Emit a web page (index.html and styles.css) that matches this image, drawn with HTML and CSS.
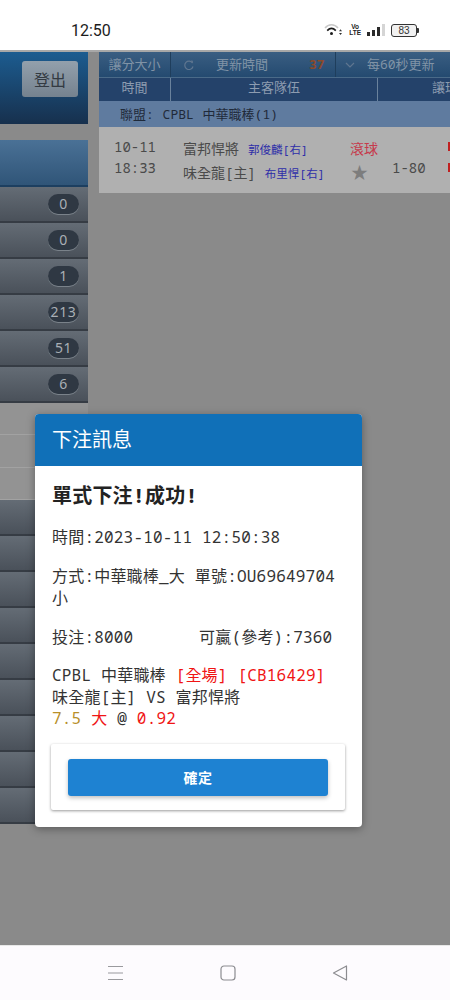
FILE: index.html
```html
<!DOCTYPE html>
<html lang="zh-Hant">
  <head>
    <meta charset="UTF-8" />
    <meta name="viewport" content="width=device-width, initial-scale=1.0" />
    <title>下注訊息</title>
    <link rel="stylesheet" href="styles.css">
  </head>
  <body>
    <div class="status-bar">
      <span class="clock">12:50</span>
      <div class="status-icons">
        <svg class="wifi" width="19" height="14" viewBox="0 0 19 14">
          <path d="M1 5 C4.5 0.5 10.5 0.5 14 5" fill="none" stroke="#c8c8c8" stroke-width="1.5"/>
          <path d="M3.2 7.6 C6 4.8 9 4.8 11.8 7.6" fill="none" stroke="#1c1c1c" stroke-width="1.7"/>
          <circle cx="7.5" cy="10.5" r="1.5" fill="#1c1c1c"/>
          <path d="M15 8.2 h3 l-1.5 -2z M15 10 h3 l-1.5 2z" fill="#333"/>
        </svg>
        <span class="volte">Vo<br>LTE</span>
        <div class="signal">
          <i class="s1"></i><i class="s2"></i><i class="s3"></i><i class="s4"></i>
        </div>
        <div class="battery"><span>83</span></div>
      </div>
    </div>

    <div class="app">
      <div class="sidebar">
        <div class="top-box"><button class="logout">登出</button></div>
        <div class="side-title"></div>
        <div class="side-row"><span class="pill">0</span></div>
        <div class="side-row"><span class="pill">0</span></div>
        <div class="side-row"><span class="pill">1</span></div>
        <div class="side-row"><span class="pill">213</span></div>
        <div class="side-row"><span class="pill">51</span></div>
        <div class="side-row"><span class="pill">6</span></div>
        <div class="side-light"></div>
        <div class="side-light"></div>
        <div class="side-light"></div>
        <div class="side-row"></div>
        <div class="side-row"></div>
        <div class="side-row"></div>
        <div class="side-row"></div>
        <div class="side-row"></div>
        <div class="side-row"></div>
        <div class="side-row"></div>
        <div class="side-row"></div>
        <div class="side-row"></div>
      </div>

      <div class="content">
        <div class="toolbar">
          <div class="tool tool-size">讓分大小</div>
          <div class="tool tool-time">
            <svg width="12" height="12" viewBox="0 0 12 12">
              <path d="M9.5 4 A4.2 4.2 0 1 0 10 7.5" fill="none" stroke="#5f7690" stroke-width="1.2"/>
              <path d="M7.6 1.4 L10 1.8 L9.6 4.6z" fill="#5f7690"/>
            </svg>
            <span class="time-label">更新時間</span>
            <span class="count">37</span>
          </div>
          <div class="tool tool-rate">
            <svg width="10" height="6" viewBox="0 0 10 6">
              <path d="M1 1 L5 5 L9 1" fill="none" stroke="#5f7690" stroke-width="1.2"/>
            </svg>
            <span>每60秒更新</span>
          </div>
        </div>
        <div class="head">
          <div class="head-time">時間</div>
          <div class="head-team">主客隊伍</div>
          <div class="head-odds">讓球</div>
        </div>
        <div class="league">聯盟: CPBL 中華職棒(1)</div>
        <div class="game">
          <span class="g-date">10-11</span>
          <span class="g-team g-mid">富邦悍將<small>郭俊麟[右]</small></span>
          <span class="g-live g-mid">滾球</span>
          <span></span>
          <i class="g-odd"></i>
          <span class="g-date">18:33</span>
          <span class="g-team g-low">味全龍[主]<small>布里悍[右]</small></span>
          <span class="g-star g-low">★</span>
          <span class="g-line">1-80</span>
          <i class="g-odd"></i>
        </div>
      </div>

      <div class="dialog">
        <div class="dialog-head">下注訊息</div>
        <div class="dialog-body">
          <h2>單式下注!成功!</h2>
          <p>時間:2023-10-11 12:50:38</p>
          <p>方式:中華職棒_大 單號:OU69649704<br>小</p>
          <p class="stake"><span class="stake-bet">投注:8000</span><span>可贏(參考):7360</span></p>
          <p class="bet-info">
            CPBL 中華職棒 <span class="red">[全場] [CB16429]</span><br>
            味全龍[主] VS 富邦悍將<br>
            <span class="gold">7.5</span> <span class="red">大</span> @ <span class="red">0.92</span>
          </p>
          <div class="dialog-actions">
            <button class="ok">確定</button>
          </div>
        </div>
      </div>
    </div>

    <div class="nav-bar">
      <svg width="17" height="16" viewBox="0 0 17 16">
        <path d="M1 1.5 H16 M1 8 H16 M1 14.5 H16" stroke="#9a9a9e" stroke-width="1.2" fill="none"/>
      </svg>
      <svg width="16" height="16" viewBox="0 0 16 16">
        <rect x="1" y="1" width="14" height="14" rx="3" stroke="#8c8c90" stroke-width="1.2" fill="none"/>
      </svg>
      <svg width="16" height="16" viewBox="0 0 16 16">
        <path d="M1.5 8 L14.5 1 V15z" stroke="#8c8c90" stroke-width="1.2" stroke-linejoin="round" fill="none"/>
      </svg>
    </div>
  </body>
</html>
```

FILE: styles.css
```css
* {
  box-sizing: border-box;
}
html,
body {
  margin: 0;
  height: 1000px;
  overflow: hidden;
}
body {
  display: flex;
  flex-direction: column;
  font-family: "Noto Sans Mono", "DejaVu Sans Mono", "Noto Sans CJK TC", monospace;
  background-color: #fff;
}
button {
  font-family: inherit;
}

.status-bar {
  height: 50px;
  display: flex;
  justify-content: space-between;
  align-items: center;
  padding: 10px 33px 0 71px;
  background-color: #fff;
}
.clock {
  font-family: Roboto, sans-serif;
  font-size: 16px;
  color: #1c1c1c;
}
.status-icons {
  display: flex;
  align-items: center;
  gap: 6px;
}
.volte {
  font-family: "Liberation Sans", sans-serif;
  font-size: 6.5px;
  font-weight: bold;
  line-height: 6px;
  color: #222;
  text-align: center;
}
.signal {
  display: flex;
  align-items: flex-end;
  gap: 2px;
  height: 12px;
}
.signal i {
  width: 3px;
  background-color: #2a2a2a;
}
.signal .s1 { height: 4px; }
.signal .s2 { height: 6px; }
.signal .s3 { height: 9px; }
.signal .s4 { height: 12px; background-color: #d5d5d5; }
.battery {
  position: relative;
  width: 26px;
  height: 13px;
  border: 1px solid #333;
  border-radius: 3px;
  text-align: center;
  font-family: "Liberation Sans", sans-serif;
  font-size: 10px;
  line-height: 11px;
  color: #333;
  background-color: #f1f1f1;
}
.battery::after {
  content: "";
  position: absolute;
  right: -3px;
  top: 3px;
  width: 2px;
  height: 5px;
  background-color: #333;
  border-radius: 0 1px 1px 0;
}

.app {
  position: relative;
  flex: 1;
  display: flex;
  overflow: hidden;
  background-color: #8a8a8a;
  border-top: 2px solid #a8a8a8;
}

.sidebar {
  width: 88px;
  flex-shrink: 0;
  display: flex;
  flex-direction: column;
}
.top-box {
  height: 72px;
  padding: 9px 10px 0 0;
  display: flex;
  justify-content: flex-end;
  align-items: flex-start;
  background: linear-gradient(#1c5c90, #17304d);
}
.logout {
  width: 56px;
  height: 36px;
  border: none;
  border-radius: 3px;
  background: linear-gradient(#93a0ac, #75828f);
  color: #333a42;
  font-size: 16px;
  padding: 0;
}
.side-title {
  height: 47px;
  margin-top: 16px;
  background: linear-gradient(#4a7196, #305578);
  border-bottom: 2px solid #1d3f60;
}
.side-row {
  height: 36px;
  flex-shrink: 0;
  display: flex;
  justify-content: flex-end;
  align-items: center;
  padding-right: 9px;
  background: linear-gradient(#646c75, #4a515a);
  border-bottom: 2px solid #363c44;
}
.pill {
  width: 31px;
  height: 20px;
  border-radius: 10px;
  background-color: #2f3843;
  box-shadow: 0 1px 0 #7a828a;
  color: #a9afb5;
  font-family: "Noto Sans", sans-serif;
  font-size: 14px;
  letter-spacing: 0.6px;
  line-height: 20px;
  text-align: center;
}
.side-light {
  height: 32.4px;
  flex-shrink: 0;
  background-color: #939393;
  border-bottom: 1px solid #a2a2a2;
}

.content {
  flex: 1;
  margin-left: 11px;
  min-width: 0;
}
.toolbar {
  height: 25px;
  display: flex;
  background: linear-gradient(#3a5e82, #244a70);
  color: #8093a6;
  font-size: 13px;
  line-height: 25px;
}
.tool {
  display: flex;
  align-items: center;
  border-right: 1px solid #1f3e5c;
}
.tool-size {
  width: 72px;
  justify-content: center;
}
.tool-time {
  width: 165px;
  padding-left: 12px;
}
.time-label {
  margin-left: 21px;
}
.count {
  margin-left: 41px;
  color: #8a4a2c;
  font-size: 13px;
  font-weight: bold;
}
.tool-rate {
  flex: 1;
  padding-left: 9px;
  border-right: none;
  white-space: nowrap;
}
.tool-rate svg {
  margin-right: 12px;
}
.head {
  height: 24px;
  display: flex;
  background-color: #24426a;
  border-top: 1px solid #4a6a88;
  color: #8d9cb0;
  font-size: 13px;
  line-height: 19px;
  text-align: center;
}
.head-time {
  width: 72px;
  border-right: 1px solid #6a829c;
}
.head-team {
  width: 207px;
  border-right: 1px solid #6a829c;
}
.head-odds {
  flex: 1;
  min-width: 0;
  padding-left: 54px;
  white-space: nowrap;
  overflow: hidden;
  text-align: left;
}
.league {
  height: 26px;
  padding-left: 21px;
  background-color: #5f7b9f;
  color: #1f2a3a;
  font-size: 13px;
  word-spacing: 1px;
  line-height: 26px;
}
.game {
  height: 66px;
  padding-top: 9px;
  display: grid;
  grid-template-columns: 84px 167px 42px 56px 1fr;
  grid-template-rows: 21px 21px;
  align-items: center;
  background-color: #b0b0b0;
  color: #4a4a4a;
  font-size: 14px;
  white-space: nowrap;
  overflow: hidden;
}
.g-date {
  padding-left: 15px;
}
.g-team small {
  margin-left: 9px;
  font-size: 11.5px;
  color: #2e2ea8;
}
.g-mid {
  margin-top: 2px;
}
.g-low {
  margin-top: 8px;
}
.g-live {
  color: #c63a4c;
  font-size: 14px;
}
.g-star {
  margin-left: 1px;
  color: #7d7d7d;
  font-family: "Noto Sans CJK TC", sans-serif;
  font-size: 17px;
}
.g-odd {
  justify-self: end;
  width: 2px;
  height: 9px;
  background-color: #c02020;
}

.dialog {
  position: absolute;
  left: 35px;
  top: 362px;
  width: 327px;
  height: 413px;
  background-color: #fff;
  border-radius: 4px;
  box-shadow: 0 2px 8px rgba(0, 0, 0, 0.35);
  overflow: hidden;
}
.dialog-head {
  height: 52px;
  padding-left: 17px;
  background-color: #1070b8;
  color: #fff;
  font-size: 20px;
  line-height: 51px;
}
.dialog-body {
  padding: 17px 10px 0 17px;
  color: #333;
  font-size: 16px;
  line-height: 22px;
  letter-spacing: 0.2px;
}
.dialog-body h2 {
  margin: 0 0 17px;
  font-size: 20px;
  font-weight: bold;
  line-height: 26px;
  color: #222;
}
.dialog-body p {
  margin: 0 0 17px;
}
.stake {
  display: flex;
}
.stake-bet {
  width: 147px;
}
.red {
  color: #f01414;
}
.gold {
  color: #b8902a;
}
.bet-info {
  line-height: 21.5px;
}
.dialog-body .bet-info {
  margin-bottom: 14px;
}
.dialog-actions {
  margin: 14px 7px 0 -1px;
  height: 66px;
  padding: 15px 17px;
  background-color: #fff;
  border-radius: 2px;
  box-shadow: 0 1px 3px rgba(0, 0, 0, 0.4);
}
.ok {
  display: block;
  width: 100%;
  height: 37px;
  border: none;
  border-radius: 3px;
  background-color: #1e82d2;
  box-shadow: 0 2px 4px rgba(0, 0, 0, 0.25);
  color: #fff;
  font-size: 14px;
  font-weight: bold;
  letter-spacing: 0.5px;
}

.nav-bar {
  height: 55px;
  flex-shrink: 0;
  display: flex;
  align-items: flex-start;
  padding: 19px 0 0 107px;
  gap: 96px;
  background-color: #fdfbfe;
  border-top: 1px solid #e8e8e8;
}
```
